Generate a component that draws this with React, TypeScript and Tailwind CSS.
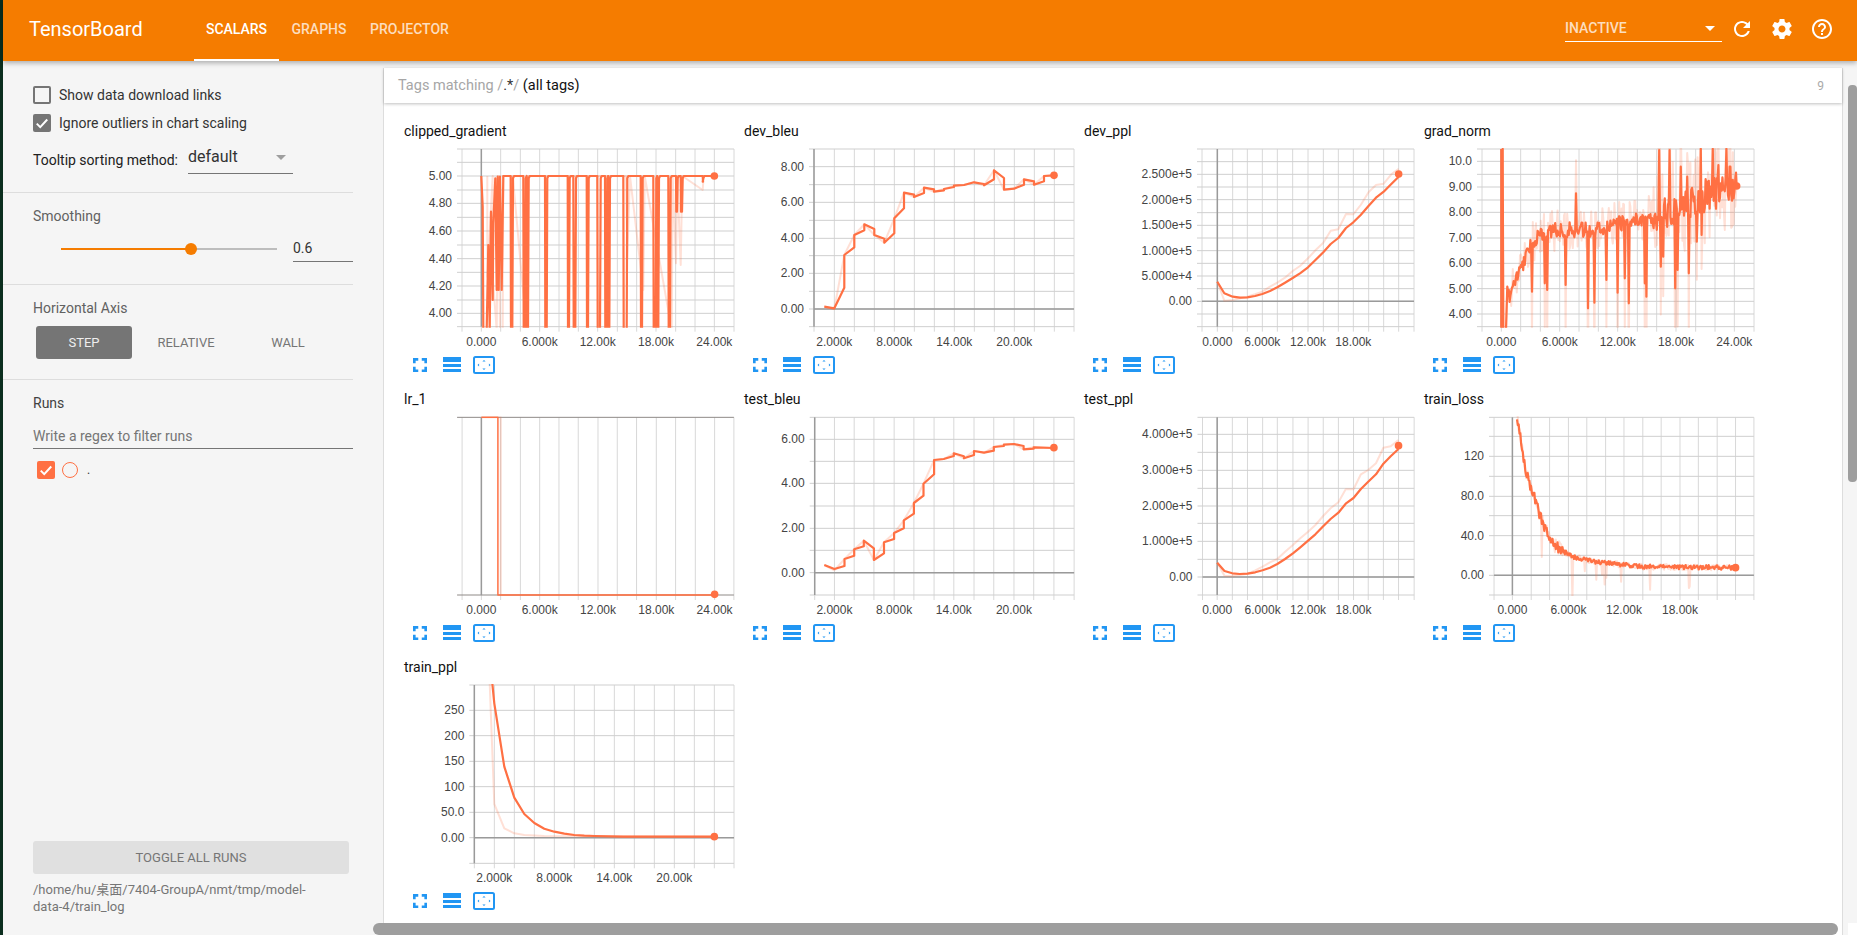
import { useId } from "react"

type Spec = {
  title: string
  sx: number
  ox: number
  oy: number
  xs: number[]
  ys: number[]
  zeroX?: number
  zeroY?: number
  xLabels: [number, string][]
  yLabels: [number, string][]
  line: number[][]
  raw: number[][]
  dot: number[]
}

// small seeded random so the noisy lines stay the same on every render
function seeded(a: number) {
  return () => {
    a = (a + 0x6d2b79f5) | 0
    let t = Math.imul(a ^ (a >>> 15), 1 | a)
    t = (t + Math.imul(t ^ (t >>> 7), 61 | t)) ^ t
    return ((t ^ (t >>> 14)) >>> 0) / 4294967296
  }
}

function lerp(pts: number[][], x: number) {
  for (let i = 1; i < pts.length; i++) {
    if (x <= pts[i][0]) {
      const [x0, y0] = pts[i - 1]
      const [x1, y1] = pts[i]
      return y0 + ((x - x0) / (x1 - x0)) * (y1 - y0)
    }
  }
  return pts[pts.length - 1][1]
}

function pairs(s: string) {
  return s.trim().split(/\s+/).map((p) => p.split(",").map(Number))
}

function clippedLine(dips: number[][], head: number[][], top: number, end: number) {
  const out = [...head]
  for (const [a, b, depth] of dips) {
    out.push([a, top], [a + 1, depth], [b - 1, depth], [b + 1, top + 7], [b + 4, top])
  }
  out.push([end, top])
  return out
}

const gradTrend = pairs("262,570 300,480 340,390 400,360 500,360 600,340 700,320 800,280 850,260 950,228")
const gradDips: Record<number, number> = {
  335: 545, 375: 520, 382: 540, 437: 525, 505: 595, 524: 578, 560: 510, 593: 548, 615: 505, 627: 580,
  675: 520, 680: 560, 722: 470, 730: 440, 765: 535, 772: 480, 806: 490, 830: 395, 845: 375,
  467: 250, 718: 120, 748: 120, 782: 170, 802: 200, 843: 117, 878: 117, 920: 117, 895: 165, 930: 170,
}

function gradLine(amp: number, seed: number, extra: number) {
  const r = seeded(seed)
  const out = pairs("244,117 244,660 248,660 248,117 250,660 258,660 262,530")
  for (let x = 264; x < 950; x += 2.4) {
    const spread = x > 700 ? 2.2 : 1
    let y = lerp(gradTrend, x) + (r() - 0.5) * amp * spread
    const hit = Object.keys(gradDips).map(Number).find((k) => Math.abs(k - x) < 1.3)
    if (hit) {
      const d = gradDips[hit]
      y = d + (d - lerp(gradTrend, x)) * extra
    }
    out.push([x, y])
  }
  out.push([950, 228])
  return out
}

const lossTrend = pairs("930,97 950,265 985,410 1010,480 1050,515 1100,530 1200,545 1400,548")

function lossLine(amp: number, seed: number, spikes: number) {
  const r = seeded(seed)
  const out: number[][] = []
  for (let x = 930; x < 1406; x += 1.8) {
    const t = lerp(lossTrend, x)
    let y = t + (r() - 0.5) * amp * (x < 1030 ? 2.4 : 1)
    if (spikes && r() < spikes && x < 1320) y = t + 30 + r() * (x < 1060 ? 110 : 40)
    out.push([x, y])
  }
  out.push([1406, 548])
  return out
}

const AX = ["0.000", "6.000k", "12.00k", "18.00k", "24.00k"]
const BX = ["2.000k", "8.000k", "14.00k", "20.00k"]

const charts: Spec[] = [
  {
    title: "clipped_gradient", sx: 3, ox: 0, oy: -30,
    xs: [216, 274, 332, 391, 449, 507, 565, 623, 682, 740, 798, 857, 915, 973, 1032],
    ys: [117, 157, 198, 240, 280, 322, 363, 405, 446, 487, 528, 570, 610, 650],
    zeroX: 274,
    xLabels: [[274, AX[0]], [449, AX[1]], [623, AX[2]], [798, AX[3]], [973, AX[4]]],
    yLabels: [[198, "5.00"], [280, "4.80"], [363, "4.60"], [446, "4.40"], [528, "4.20"], [610, "4.00"]],
    line: clippedLine(
      [[362, 368, 660], [400, 406, 660], [410, 415, 660], [465, 471, 660], [533, 538, 660], [550, 557, 660], [590, 595, 660], [622, 631, 660], [645, 651, 660], [654, 659, 660], [700, 711, 660], [752, 757, 660], [790, 798, 660], [801, 806, 660], [835, 841, 660], [858, 862, 305], [872, 877, 305], [938, 939, 215]],
      pairs("274,198 278,290 280,660 283,660 290,660 295,405 299,660 303,305 308,570 310,340 316,205 320,540 323,200 326,540 330,200 335,540 340,198"),
      198, 973,
    ),
    raw: pairs("292,198 292,500 308,198 308,500 320,660 325,198 330,660 338,660 340,198 362,198 362,635 368,198 410,660 415,198 708,198 712,445 720,198 760,540 764,198 845,660 848,198 858,460 862,198 872,465 877,198 938,240 941,198 973,198"),
    dot: [973, 198],
  },
  {
    title: "dev_bleu", sx: 3, ox: 10, oy: -30,
    xs: [222, 283, 343, 403, 463, 523, 583, 643, 703, 763, 823, 883, 943, 1002],
    ys: [117, 170, 224, 277, 331, 385, 437, 490, 544, 597, 650],
    zeroX: 222, zeroY: 597,
    xLabels: [[283, BX[0]], [463, BX[1]], [643, BX[2]], [823, BX[3]]],
    yLabels: [[170, "8.00"], [277, "6.00"], [385, "4.00"], [490, "2.00"], [597, "0.00"]],
    line: pairs("253,590 283,595 313,533 313,435 343,412 343,375 373,361 373,343 403,357 403,375 433,386 433,398 463,370 463,325 492,295 492,248 522,254 522,261 552,249 552,233 582,238 582,245 612,241 612,237 642,231 642,227 672,225 702,217 732,222 732,226 762,208 762,181 792,204 792,239 822,236 852,224 852,208 882,214 882,224 912,214 912,198 942,196"),
    raw: pairs("253,590 283,597 313,435 343,375 373,343 403,375 433,398 463,325 492,248 522,261 552,233 582,245 612,237 642,227 672,225 702,217 732,226 762,181 792,239 822,236 852,208 882,224 912,198 942,196"),
    dot: [942, 196],
  },
  {
    title: "dev_ppl", sx: 3, ox: 20, oy: -30,
    xs: [336, 382, 428, 472, 517, 562, 608, 654, 700, 745, 790, 836, 881, 926, 972],
    ys: [117, 155, 193, 231, 269, 308, 346, 384, 422, 460, 498, 536, 574, 612, 650],
    zeroX: 382, zeroY: 574,
    xLabels: [[382, AX[0]], [517, AX[1]], [654, AX[2]], [790, AX[3]]],
    yLabels: [[193, "2.500e+5"], [269, "2.000e+5"], [346, "1.500e+5"], [422, "1.000e+5"], [498, "5.000e+4"], [574, "0.00"]],
    line: pairs("382,515 403,550 428,560 450,563 472,562 495,558 517,552 540,543 562,532 585,518 608,504 630,490 654,472 677,449 700,427 722,402 745,384 768,354 790,337 812,315 836,287 858,263 881,245 904,222 926,200"),
    raw: pairs("382,515 403,572 428,570 450,565 472,560 495,553 517,545 540,530 562,518 585,503 608,483 630,468 654,445 677,420 700,398 722,362 745,358 768,312 790,313 812,285 836,246 858,225 881,221 904,193 926,176"),
    dot: [926, 192],
  },
  {
    title: "grad_norm", sx: 3, ox: 10, oy: -30,
    xs: [186, 244, 302, 361, 419, 477, 535, 593, 652, 710, 768, 827, 885, 943, 1002],
    ys: [117, 154, 193, 231, 270, 307, 347, 384, 422, 460, 498, 536, 574, 612, 650],
    zeroX: 244,
    xLabels: [[244, AX[0]], [419, AX[1]], [593, AX[2]], [768, AX[3]], [943, AX[4]]],
    yLabels: [[154, "10.0"], [231, "9.00"], [307, "8.00"], [384, "7.00"], [460, "6.00"], [536, "5.00"], [612, "4.00"]],
    line: gradLine(46, 7, 0),
    raw: gradLine(130, 11, 0.9),
    dot: [950, 228],
  },
  {
    title: "lr_1", sx: 2.178, ox: 0, oy: -23,
    xs: [157, 199, 241, 284, 326, 368, 410, 453, 495, 537, 580, 622, 665, 707, 749],
    ys: [97, 630],
    zeroX: 199,
    xLabels: [[199, AX[0]], [326, AX[1]], [453, AX[2]], [580, AX[3]], [707, AX[4]]],
    yLabels: [],
    line: pairs("199,97 235,97 235,630 707,630"),
    raw: pairs("199,97 241,97 241,630 707,630"),
    dot: [707, 628],
  },
  {
    title: "test_bleu", sx: 2.178, ox: -340, oy: -23,
    xs: [925, 968, 1011, 1054, 1098, 1141, 1185, 1228, 1272, 1315, 1359, 1402, 1446, 1490],
    ys: [97, 163, 229, 295, 363, 430, 496, 563, 630],
    zeroX: 925, zeroY: 563,
    xLabels: [[968, BX[0]], [1098, BX[1]], [1228, BX[2]], [1359, BX[3]]],
    yLabels: [[163, "6.00"], [295, "4.00"], [430, "2.00"], [563, "0.00"]],
    line: pairs("946,540 968,552 990,543 990,522 1011,512 1011,493 1032,484 1032,467 1054,490 1054,525 1076,505 1076,472 1098,462 1098,444 1119,430 1119,406 1141,386 1141,354 1162,332 1162,296 1185,268 1185,225 1206,222 1228,213 1228,205 1250,214 1250,220 1272,210 1272,198 1294,203 1315,197 1315,186 1337,183 1337,179 1359,177 1380,183 1380,193 1402,191 1402,187 1446,189"),
    raw: pairs("946,540 968,556 990,522 1011,493 1032,467 1054,525 1076,472 1098,444 1119,406 1141,354 1162,296 1185,225 1206,222 1228,205 1250,220 1272,198 1294,203 1315,186 1337,179 1359,177 1380,193 1402,187 1446,189"),
    dot: [1446, 188],
  },
  {
    title: "test_ppl", sx: 2.178, ox: 20, oy: -23,
    xs: [245, 277, 310, 343, 376, 408, 442, 475, 508, 541, 574, 606, 639, 672, 706],
    ys: [97, 148, 202, 256, 310, 363, 415, 469, 523, 576, 630],
    zeroX: 277, zeroY: 576,
    xLabels: [[277, AX[0]], [376, AX[1]], [475, AX[2]], [574, AX[3]]],
    yLabels: [[148, "4.000e+5"], [256, "3.000e+5"], [363, "2.000e+5"], [469, "1.000e+5"], [576, "0.00"]],
    line: pairs("277,533 293,558 310,565 326,567 343,566 360,562 376,556 392,548 408,537 425,522 442,505 458,487 475,467 491,448 508,424 524,402 541,383 557,356 574,339 590,312 606,290 623,268 639,236 655,214 672,192"),
    raw: pairs("277,533 293,572 310,574 326,570 343,566 360,556 376,545 392,532 408,522 425,500 442,480 458,460 475,440 491,420 508,393 524,370 541,352 557,313 574,313 590,268 606,255 623,235 639,188 655,184 672,165"),
    dot: [672, 182],
  },
  {
    title: "train_loss", sx: 2.178, ox: -320, oy: -23,
    xs: [880, 920, 961, 1001, 1042, 1082, 1123, 1163, 1204, 1244, 1285, 1325, 1366, 1406, 1446],
    ys: [97, 154, 214, 274, 334, 392, 452, 511, 571, 630],
    zeroX: 920, zeroY: 571,
    xLabels: [[920, AX[0]], [1042, AX[1]], [1163, AX[2]], [1285, AX[3]]],
    yLabels: [[214, "120"], [334, "80.0"], [452, "40.0"], [571, "0.00"]],
    line: lossLine(13, 5, 0),
    raw: lossLine(18, 9, 0.06),
    dot: [1406, 548],
  },
  {
    title: "train_ppl", sx: 3, ox: 0, oy: -26,
    xs: [253, 313, 373, 433, 493, 553, 613, 673, 733, 793, 853, 913, 973, 1032],
    ys: [105, 181, 257, 334, 410, 487, 563, 640],
    zeroX: 253, zeroY: 563,
    xLabels: [[313, BX[0]], [493, BX[1]], [673, BX[2]], [853, BX[3]]],
    yLabels: [[181, "250"], [257, "200"], [334, "150"], [410, "100"], [487, "50.0"], [563, "0.00"]],
    line: pairs("307,100 313,160 343,350 373,443 403,492 433,519 463,536 493,545 523,551 553,555 583,557 613,558 700,560 973,560"),
    raw: pairs("299,100 313,462 343,535 373,550 403,555 463,558 973,560"),
    dot: [973, 560],
  },
]

function ScalarChart({ spec }: { spec: Spec }) {
  const id = useId()
  const X = (z: number) => z / spec.sx + spec.ox
  const Y = (z: number) => z / 3 + spec.oy
  const left = X(spec.xs[0])
  const right = X(spec.xs[spec.xs.length - 1])
  const top = Y(spec.ys[0])
  const bottom = Y(spec.ys[spec.ys.length - 1])
  const toPts = (l: number[][]) => l.map(([x, y]) => `${X(x).toFixed(1)},${Y(y).toFixed(1)}`).join(" ")
  const isLr = spec.title === "lr_1"
  return (
    <svg width={350} height={216} className="block overflow-visible">
      <clipPath id={id}>
        <rect x={left} y={top - 1} width={right - left} height={bottom - top + 2} />
      </clipPath>
      {spec.xs.map((z) => (
        <line key={z} x1={X(z)} x2={X(z)} y1={top} y2={bottom + 5} stroke="#d8d8d8" />
      ))}
      {spec.ys.map((z) => (
        <line key={z} x1={left - 5} x2={right} y1={Y(z)} y2={Y(z)} stroke={isLr ? "#8f8a87" : "#cfcfcf"} />
      ))}
      {spec.zeroX !== undefined && <line x1={X(spec.zeroX)} x2={X(spec.zeroX)} y1={top} y2={bottom} stroke="#9a9a9a" strokeWidth={1.5} />}
      {spec.zeroY !== undefined && <line x1={left} x2={right} y1={Y(spec.zeroY)} y2={Y(spec.zeroY)} stroke="#9a9a9a" strokeWidth={1.5} />}
      <g clipPath={`url(#${id})`} fill="none" stroke="#ff7043" strokeLinejoin="round">
        <polyline points={toPts(spec.raw)} strokeWidth={2} opacity={0.22} />
        <polyline points={toPts(spec.line)} strokeWidth={isLr ? 1.5 : 2.2} />
      </g>
      <circle cx={X(spec.dot[0])} cy={Y(spec.dot[1])} r={3.8} fill="#ff7043" />
      {spec.xLabels.map(([z, t]) => (
        <text key={t} x={X(z)} y={206} textAnchor="middle" className="text-[12px] fill-[#444] font-['Liberation_Sans',sans-serif]">
          {t}
        </text>
      ))}
      {spec.yLabels.map(([z, t]) => (
        <text key={t} x={left - 10} y={Y(z) + 4} textAnchor="end" className="text-[12px] fill-[#444] font-['Liberation_Sans',sans-serif]">
          {t}
        </text>
      ))}
    </svg>
  )
}

function ChartCard({ spec }: { spec: Spec }) {
  return (
    <div className="h-[268px] w-[340px]">
      <div className="h-[19px] pl-[14px] text-sm leading-[20px] text-[#111]">{spec.title}</div>
      <ScalarChart spec={spec} />
      <div className="flex h-[18px] items-center pl-[23px] text-[#2196f3]">
        <svg width={14} height={14} viewBox="4 4 16 16" fill="currentColor" className="mr-[16px]">
          <path d="M7 14H4v6h6v-3H7v-3zM4 10h3V7h3V4H4v6zm13 7h-3v3h6v-6h-3v3zM14 4v3h3v3h3V4h-6z" />
        </svg>
        <svg width={18} height={16} viewBox="0 0 18 16" fill="currentColor" className="mr-[12px]">
          <rect y={0} width={18} height={5} />
          <rect y={7} width={18} height={3} />
          <rect y={12} width={18} height={3} />
        </svg>
        <svg width={22} height={18} viewBox="0 0 22 18" fill="currentColor">
          <rect x={1} y={1} width={20} height={16} rx={1.5} fill="none" stroke="currentColor" strokeWidth={2} />
          <path d="M11 4l1.6 1.6h-3.2zM11 14l-1.6-1.6h3.2zM4.5 9l1.6-1.6v3.2zM17.5 9l-1.6 1.6V7.4z" />
        </svg>
      </div>
    </div>
  )
}

function Checkbox({ checked, label }: { checked?: boolean; label: string }) {
  return (
    <div className="flex h-[18px] items-center text-sm text-[#333]">
      {checked ? (
        <span className="flex size-[18px] items-center justify-center rounded-[2px] bg-[#757575]">
          <svg width={14} height={14} viewBox="0 0 24 24" fill="none" stroke="#fff" strokeWidth={3.4}>
            <path d="M3 13l6 6L21 6" />
          </svg>
        </span>
      ) : (
        <span className="size-[18px] rounded-[2px] border-2 border-[#757575]" />
      )}
      <span className="ml-2">{label}</span>
    </div>
  )
}

export default function App() {
  return (
    <div className="relative flex h-[935px] w-[1857px] overflow-hidden bg-[#0b2e1e] font-['Roboto',sans-serif]">
      <div className="flex min-w-0 flex-1 flex-col ml-[3px]">
        <header className="relative z-10 flex h-[61px] shrink-0 items-center bg-[#f57c00] text-white shadow-[0_2px_5px_rgba(0,0,0,0.3)]">
          <div className="mb-[3px] ml-[26px] w-[165px] text-xl">TensorBoard</div>
          <nav className="flex h-full items-center text-sm font-medium">
            <div className="flex h-full w-[85px] items-center justify-center border-b-2 border-white pb-[1px]">SCALARS</div>
            <div className="flex h-full w-[80px] items-center justify-center pb-[3px] text-white/75">GRAPHS</div>
            <div className="flex h-full w-[101px] items-center justify-center pb-[3px] text-white/75">PROJECTOR</div>
          </nav>
          <div className="mb-[3px] ml-auto flex items-center">
            <div className="flex h-[25px] w-[157px] items-center justify-between border-b border-white pb-[1px] text-sm font-medium text-white/75">
              INACTIVE
              <span className="mr-[7px] border-x-[5px] border-t-[5px] border-x-transparent border-t-white" />
            </div>
            <svg width={24} height={24} viewBox="0 0 24 24" fill="#fff" className="ml-[8px]">
              <path d="M17.65 6.35C16.2 4.9 14.21 4 12 4c-4.42 0-7.99 3.58-7.99 8s3.57 8 7.99 8c3.73 0 6.84-2.55 7.73-6h-2.08c-.82 2.33-3.04 4-5.65 4-3.31 0-6-2.69-6-6s2.69-6 6-6c1.66 0 3.14.69 4.22 1.78L13 11h7V4l-2.35 2.35z" />
            </svg>
            <svg width={24} height={24} viewBox="0 0 24 24" fill="#fff" className="ml-[16px]">
              <path d="M19.43 12.98c.04-.32.07-.64.07-.98s-.03-.66-.07-.98l2.11-1.65c.19-.15.24-.42.12-.64l-2-3.46c-.12-.22-.39-.3-.61-.22l-2.49 1c-.52-.4-1.08-.73-1.69-.98l-.38-2.65C14.46 2.18 14.25 2 14 2h-4c-.25 0-.46.18-.49.42l-.38 2.65c-.61.25-1.17.59-1.69.98l-2.49-1c-.23-.09-.49 0-.61.22l-2 3.46c-.13.22-.07.49.12.64l2.11 1.65c-.04.32-.07.65-.07.98s.03.66.07.98l-2.11 1.65c-.19.15-.24.42-.12.64l2 3.46c.12.22.39.3.61.22l2.49-1c.52.4 1.08.73 1.69.98l.38 2.65c.03.24.24.42.49.42h4c.25 0 .46-.18.49-.42l.38-2.65c.61-.25 1.17-.59 1.69-.98l2.49 1c.23.09.49 0 .61-.22l2-3.46c.12-.22.07-.49-.12-.64l-2.11-1.65zM12 15.5c-1.93 0-3.5-1.57-3.5-3.5s1.57-3.5 3.5-3.5 3.5 1.57 3.5 3.5-1.57 3.5-3.5 3.5z" />
            </svg>
            <svg width={24} height={24} viewBox="0 0 24 24" fill="#fff" className="ml-[16px] mr-[23px]">
              <path d="M11 18h2v-2h-2v2zm1-16C6.48 2 2 6.48 2 12s4.48 10 10 10 10-4.48 10-10S17.52 2 12 2zm0 18c-4.41 0-8-3.59-8-8s3.59-8 8-8 8 3.59 8 8-3.59 8-8 8zm0-14c-2.21 0-4 1.79-4 4h2c0-1.1.9-2 2-2s2 .9 2 2c0 2-3 1.75-3 5h2c0-2.25 3-2.5 3-5 0-2.21-1.79-4-4-4z" />
            </svg>
          </div>
        </header>

        <div className="flex min-h-0 flex-1 bg-[#f5f5f5]">
          <aside className="flex w-[380px] shrink-0 flex-col">
            <section className="h-[132px] w-[350px] shrink-0 border-b border-[#ddd] pl-[30px] pt-[25px]">
              <Checkbox label="Show data download links" />
              <div className="mt-[10px]">
                <Checkbox checked label="Ignore outliers in chart scaling" />
              </div>
              <div className="mt-[13px] flex items-center text-sm text-[#212121]">
                <span className="w-[155px]">Tooltip sorting method:</span>
                <div className="flex h-[29px] w-[105px] items-center justify-between border-b border-[#757575] pb-[5px] text-base text-[#333]">
                  default
                  <span className="mr-[7px] mt-[2px] border-x-[5px] border-t-[5px] border-x-transparent border-t-[#9e9e9e]" />
                </div>
              </div>
            </section>

            <section className="h-[92px] w-[350px] shrink-0 border-b border-[#ddd] pl-[30px] pt-[13px]">
              <div className="text-sm leading-5 text-[#616161]">Smoothing</div>
              <div className="mt-[11px] flex h-[25px]">
                <div className="relative ml-[28px] mt-[11px] flex h-[2px] w-[216px] bg-[#bdbdbd]">
                  <div className="h-full w-[130px] bg-[#f57c00]" />
                  <div className="absolute left-[124px] top-[-5px] size-3 rounded-full bg-[#f57c00]" />
                </div>
                <div className="ml-[16px] w-[60px] border-b border-[#757575] text-sm leading-[23px] text-[#333]">0.6</div>
              </div>
            </section>

            <section className="h-[95px] w-[350px] shrink-0 border-b border-[#ddd] pl-[30px] pt-[13px]">
              <div className="text-sm leading-5 text-[#616161]">Horizontal Axis</div>
              <div className="ml-[3px] mt-[8px] flex gap-[6px] text-[13px]">
                <div className="flex h-[33px] w-[96px] items-center justify-center rounded-[3px] bg-[#757575] text-[#eee]">STEP</div>
                <div className="flex h-[33px] w-[96px] items-center justify-center text-[#757575]">RELATIVE</div>
                <div className="flex h-[33px] w-[96px] items-center justify-center text-[#757575]">WALL</div>
              </div>
            </section>

            <section className="w-[350px] pl-[30px] pt-[13px]">
              <div className="text-sm leading-5 text-[#424242]">Runs</div>
              <div className="mt-[13px] border-b border-[#757575] pb-[2px] text-sm leading-5 text-[#757575]">Write a regex to filter runs</div>
              <div className="mt-[12px] ml-[4px] flex h-[18px] items-center">
                <span className="flex size-[18px] items-center justify-center rounded-[2px] bg-[#ff7043]">
                  <svg width={14} height={14} viewBox="0 0 24 24" fill="none" stroke="#fff" strokeWidth={3.4}>
                    <path d="M3 13l6 6L21 6" />
                  </svg>
                </span>
                <span className="ml-[7px] size-[16px] rounded-full border-[1.5px] border-[#ff7043]" />
                <span className="ml-[9px] text-xs text-[#333]">.</span>
              </div>
            </section>

            <div className="mt-auto pb-[20px] pl-[30px]">
              <div className="flex h-[33px] w-[316px] items-center justify-center rounded-[3px] bg-[#e0e0e0] text-[13px] text-[#757575]">TOGGLE ALL RUNS</div>
              <div className="mt-[7px] w-[300px] text-[13px] leading-[17px] text-[#757575] font-['Roboto','Noto_Sans_CJK_SC',sans-serif]">
                /home/hu/桌面/7404-GroupA/nmt/tmp/model-
                <br />
                data-4/train_log
              </div>
            </div>
          </aside>

          <main className="mr-[14px] mt-[7px] flex min-w-0 flex-1 flex-col border-r border-[#ddd] bg-white border-l border-l-[#ddd]">
            <div className="flex h-[35px] shrink-0 items-center justify-between pl-[14px] pr-[18px] text-[14.5px] shadow-[0_1px_3px_rgba(0,0,0,0.25)]">
              <div>
                <span className="text-[#a6a6a6]">Tags matching /</span>
                <span className="text-[#333]">.*</span>
                <span className="text-[#a6a6a6]">/</span>
                <span className="text-[#111]"> (all tags)</span>
              </div>
              <span className="text-xs text-[#aaa]">9</span>
            </div>
            <div className="grid grid-cols-[repeat(4,340px)] pl-[6px] pt-[18px]">
              {charts.map((c) => (
                <ChartCard key={c.title} spec={c} />
              ))}
            </div>
          </main>
        </div>
      </div>
      <div className="absolute right-0 top-[85px] h-[397px] w-[9px] rounded-[4px] bg-[#9e9e9e]" />
      <div className="absolute bottom-0 left-[373px] right-[19px] h-[12px] rounded-[6px] bg-[#9e9e9e]" />
      <div className="absolute bottom-0 right-0 h-[12px] w-[9px] bg-white" />
    </div>
  )
}
